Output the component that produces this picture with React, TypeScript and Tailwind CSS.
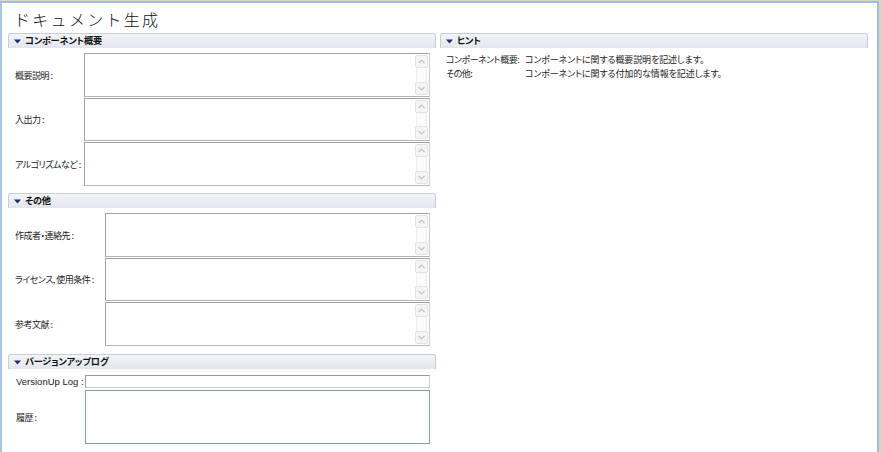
import React from "react";

const jp = "font-['MS_UI_Gothic','Noto_Sans_CJK_JP',sans-serif] [font-feature-settings:'palt'] whitespace-nowrap tracking-[-0.5px]";

function Tri() {
  return (
    <svg width="7" height="5" viewBox="0 0 7 5" className="shrink-0">
      <polygon points="0,0.5 7,0.5 3.5,4.5" fill="#1c2f6e" />
    </svg>
  );
}

function Header({ title }: { title: string }) {
  return (
    <div className="h-[15px] shrink-0 flex items-center gap-[4px] pl-[5px] rounded-t-[3px] border border-b-0 border-[#c9ced6] bg-gradient-to-b from-[#f3f4f7] to-[#e2e6ec]">
      <Tri />
      <span className="font-['Noto_Sans_CJK_JP',sans-serif] [font-feature-settings:'palt'] whitespace-nowrap tracking-[-0.2px] text-[9.2px] font-bold text-[#111] leading-none">{title}</span>
    </div>
  );
}

function ScrollBar() {
  return (
    <div className="w-[14px] h-full flex flex-col justify-between py-[1px] pr-[1px]">
      <div className="h-[13px] w-[13px] flex items-center justify-center border border-[#e2e2e2] bg-[#f5f5f5] rounded-[2px]">
        <svg width="7" height="5" viewBox="0 0 7 5">
          <polyline points="0.5,4 3.5,1 6.5,4" fill="none" stroke="#c4c4c4" strokeWidth="1.2" />
        </svg>
      </div>
      <div className="flex-1 mx-[1px] border-x border-[#efefef] bg-[#fbfbfb]" />
      <div className="h-[13px] w-[13px] flex items-center justify-center border border-[#e2e2e2] bg-[#f5f5f5] rounded-[2px]">
        <svg width="7" height="5" viewBox="0 0 7 5">
          <polyline points="0.5,1 3.5,4 6.5,1" fill="none" stroke="#c4c4c4" strokeWidth="1.2" />
        </svg>
      </div>
    </div>
  );
}

function Area({ label, labelW, h }: { label: string; labelW: string; h: string }) {
  return (
    <div className={`flex items-center ${h}`}>
      <div className={`${labelW} shrink-0 pl-[7px] ${jp} text-[9px] text-[#222] leading-none`}>{label}</div>
      <div className="flex-1 h-full flex justify-end bg-white border border-[#a2a2a2] border-r-[#cdcdcd] border-b-[#b5b5b5]">
        <ScrollBar />
      </div>
    </div>
  );
}

export default function App() {
  return (
    <div className="w-[882px] h-[452px] bg-[#d9d4c4] overflow-hidden">
      <div className="w-[879px] h-[452px] mt-[1px] border-t-2 border-x-2 border-[#9fbbe6] border-l-[#a8c2ea] bg-white flex flex-col pl-[6px] pr-[7px]">
        <div className="font-['Noto_Sans_CJK_JP',sans-serif] text-[16px] font-light tracking-[2.3px] text-[#111] leading-none pt-[8px] pl-[6px] h-[30px] shrink-0">
          ドキュメント生成
        </div>
        <div className="flex gap-[4px]">
          <div className="w-[428px] flex flex-col">
            <Header title="コンポーネント概要" />
            <div className="flex flex-col gap-[1px] pt-[5px] pr-[6px]">
              <Area label="概要説明 :" labelW="w-[76px]" h="h-[44px]" />
              <Area label="入出力 :" labelW="w-[76px]" h="h-[43px]" />
              <Area label="アルゴリズムなど :" labelW="w-[76px]" h="h-[44px]" />
            </div>
            <div className="h-[7px] shrink-0" />
            <Header title="その他" />
            <div className="flex flex-col gap-[1px] pt-[5px] pr-[6px]">
              <Area label="作成者・連絡先 :" labelW="w-[97px]" h="h-[44px]" />
              <Area label="ライセンス, 使用条件 :" labelW="w-[97px]" h="h-[43px]" />
              <Area label="参考文献 :" labelW="w-[97px]" h="h-[44px]" />
            </div>
            <div className="h-[8px] shrink-0" />
            <Header title="バージョンアップログ" />
            <div className="flex flex-col gap-[2px] pt-[6px] pr-[6px]">
              <div className="flex items-center h-[13px]">
                <div className="w-[77px] shrink-0 pl-[8px] font-['Liberation_Sans',sans-serif] text-[9.5px] text-[#222] leading-none whitespace-nowrap">
                  VersionUp Log :
                </div>
                <div className="flex-1 h-full bg-white border border-[#9a9a9a] border-r-[#d0d0d0] border-b-[#d0d0d0]" />
              </div>
              <div className="flex items-center h-[54px]">
                <div className={`w-[77px] shrink-0 pl-[8px] ${jp} text-[9px] text-[#222] leading-none`}>履歴 :</div>
                <div className="flex-1 h-full bg-white border border-[#7f9db9]" />
              </div>
            </div>
          </div>
          <div className="w-[428px] flex flex-col">
            <Header title="ヒント" />
            <div className="pt-[5px] pl-[6px] font-['Noto_Sans_CJK_JP',sans-serif] [font-feature-settings:'palt'] whitespace-nowrap text-[9px] text-[#222] leading-[14px]">
              <div className="flex">
                <span className="w-[79px] shrink-0 tracking-[-0.5px]">コンポーネント概要:</span>
                <span className="tracking-[-0.1px]">コンポーネントに関する概要説明を記述します。</span>
              </div>
              <div className="flex">
                <span className="w-[79px] shrink-0 tracking-[-0.5px]">その他:</span>
                <span className="tracking-[-0.1px]">コンポーネントに関する付加的な情報を記述します。</span>
              </div>
            </div>
          </div>
        </div>
      </div>
    </div>
  );
}
